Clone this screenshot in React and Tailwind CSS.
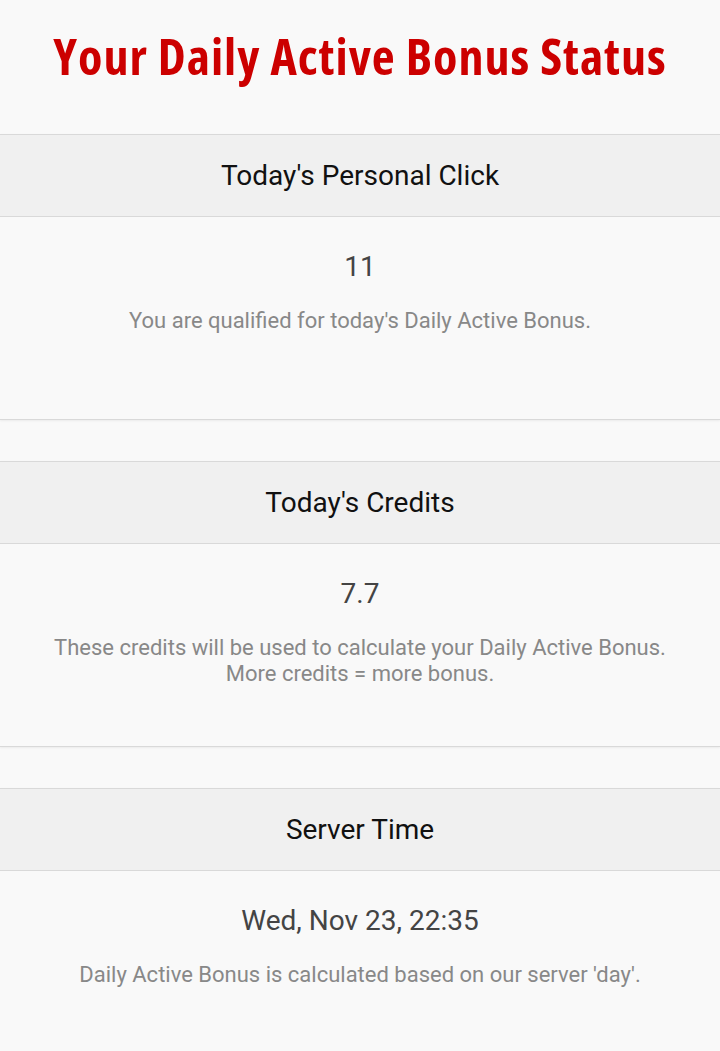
import React from "react";

const cards = [
  {
    title: "Today's Personal Click",
    value: "11",
    lines: ["You are qualified for today's Daily Active Bonus."],
  },
  {
    title: "Today's Credits",
    value: "7.7",
    lines: [
      "These credits will be used to calculate your Daily Active Bonus.",
      "More credits = more bonus.",
    ],
  },
  {
    title: "Server Time",
    value: "Wed, Nov 23, 22:35",
    lines: ["Daily Active Bonus is calculated based on our server 'day'."],
  },
];

const StatusCard = ({ title, value, lines }) => {
  return (
    <section className="border-y border-[#d9d9d9] shadow-[0_1px_2px_rgba(0,0,0,0.06)]">
      <div className="h-[82px] flex items-center justify-center bg-[#f0f0f0] border-b border-[#d9d9d9]">
        <h2 className="text-[28px] text-[#111]">{title}</h2>
      </div>
      <div className="h-[202px] pt-[32px] text-center bg-[#f9f9f9]">
        <div className="text-[28px] leading-[36px] text-[#444]">{value}</div>
        <p className="mt-[23px] text-[22px] leading-[26px] text-[#888]">
          {lines.map((l) => (
            <span key={l} className="block">
              {l}
            </span>
          ))}
        </p>
      </div>
    </section>
  );
};

export default function App() {
  return (
    <div className="min-h-screen bg-[#f9f9f9] font-['Roboto',sans-serif] overflow-hidden">
      <div className="h-[134px] flex items-center justify-center pb-[22px]">
        <h1 className="font-['Open_Sans',sans-serif] font-bold font-stretch-condensed text-[50px] tracking-[0.02em] leading-none text-[#cc0000] whitespace-nowrap">
          Your Daily Active Bonus Status
        </h1>
      </div>
      <div className="flex flex-col gap-[41px]">
        {cards.map((c) => (
          <StatusCard key={c.title} {...c} />
        ))}
      </div>
    </div>
  );
}
